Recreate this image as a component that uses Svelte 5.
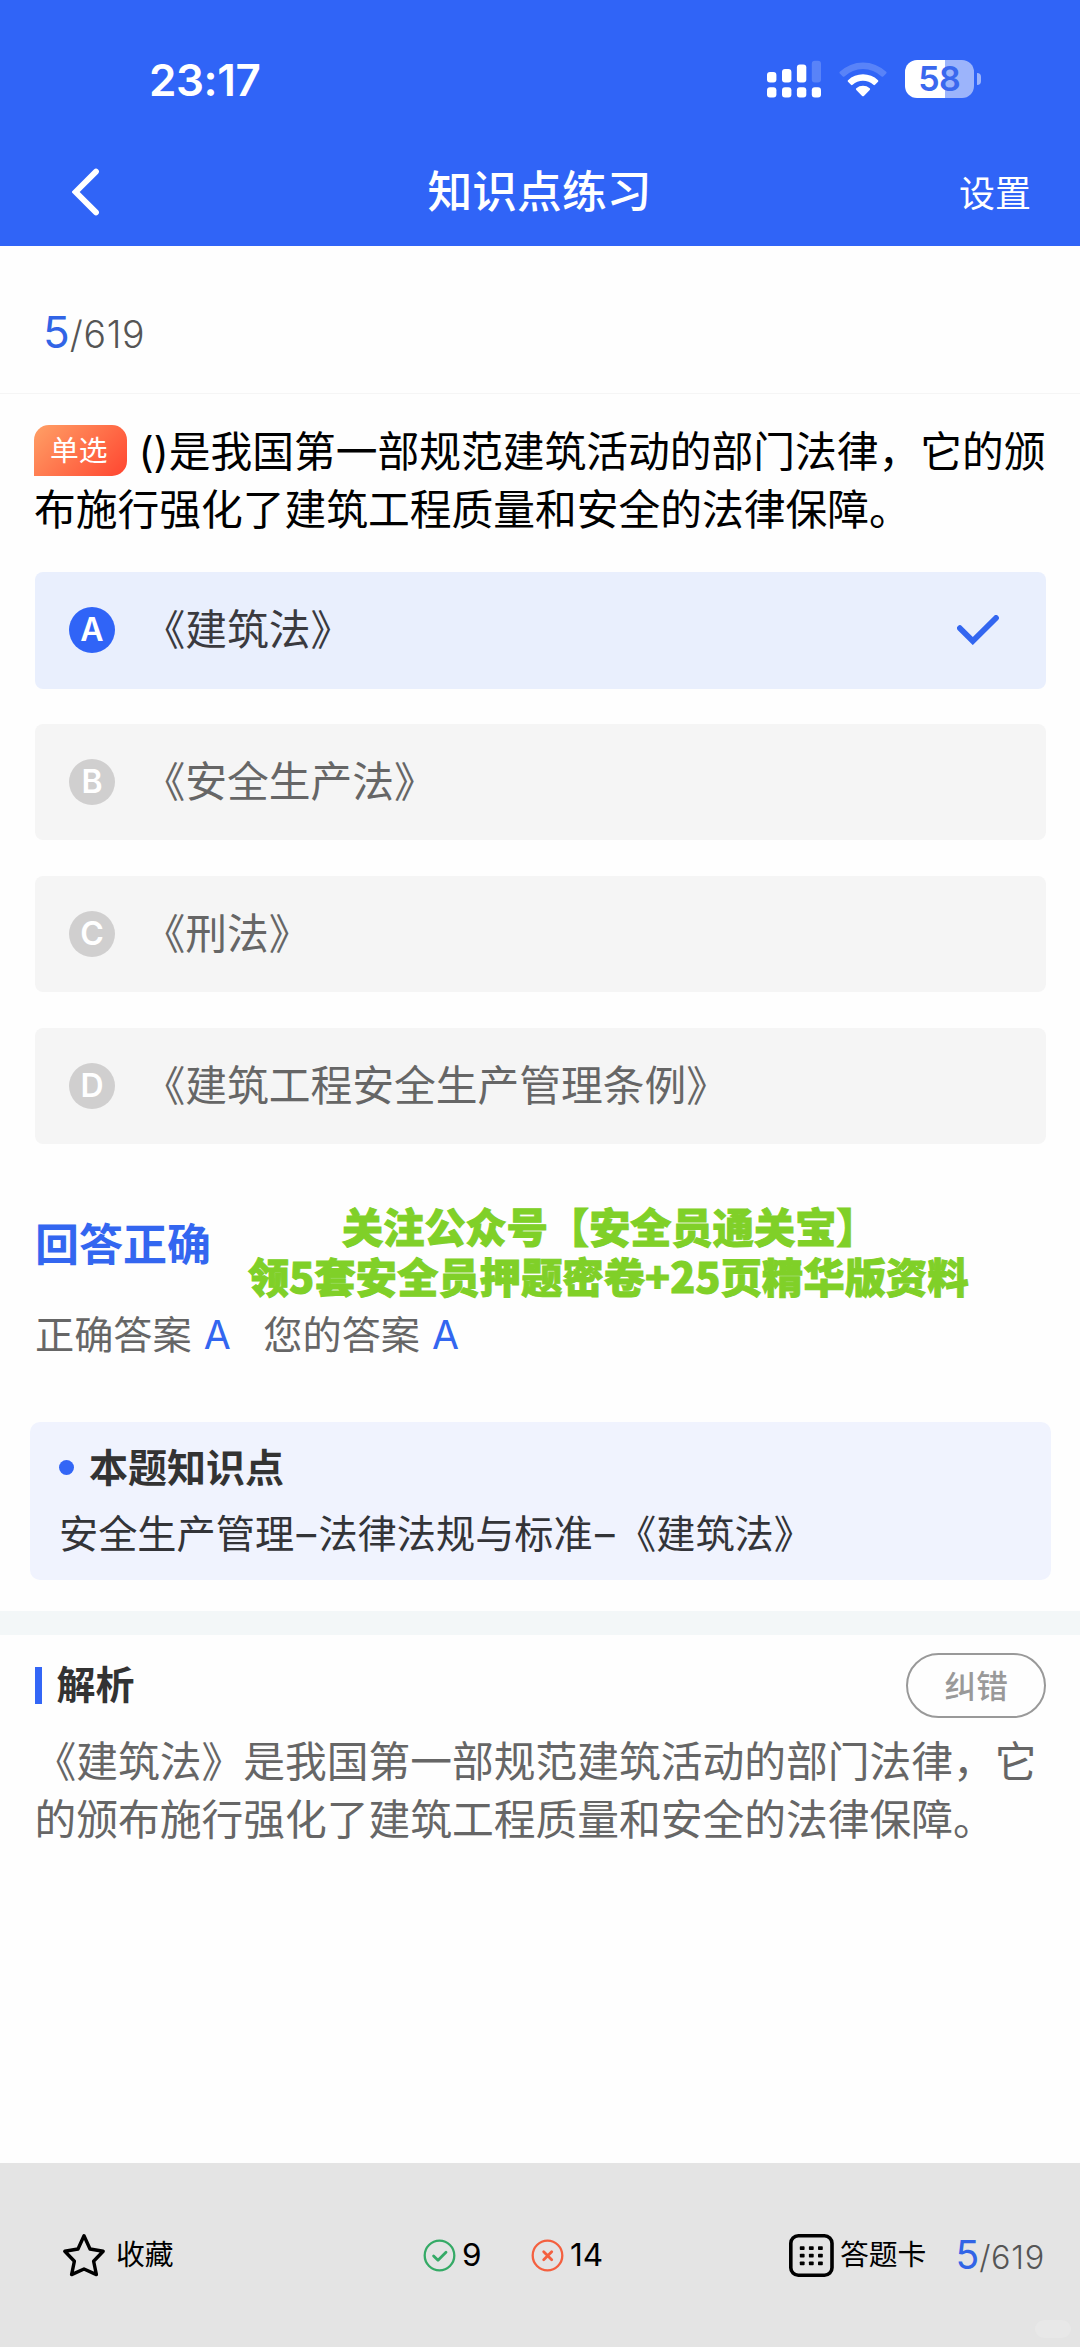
<script>
  const options = [
    { key: 'A', text: '《建筑法》', selected: true },
    { key: 'B', text: '《安全生产法》' },
    { key: 'C', text: '《刑法》' },
    { key: 'D', text: '《建筑工程安全生产管理条例》' }
  ];
  const current = 5;
  const total = 619;
  const dots = [13.2, 22.3, 31.4];
  const dotRows = [14, 21.6, 29.2];
</script>

<div class="page">
  <header>
    <div class="status">
      <span class="time">23:17</span>
      <div class="indicators">
        <svg class="signal" width="54" height="38" viewBox="0 0 54 38" fill="#fff">
          <rect x="0" y="12" width="9.4" height="10.6" rx="3" />
          <rect x="15" y="9" width="9.4" height="13.6" rx="3" />
          <rect x="29.9" y="4.5" width="9.4" height="18.1" rx="3" />
          <rect x="44.8" y="0.7" width="9.2" height="21.9" rx="3" opacity=".2" />
          <rect x="0" y="27.2" width="9.4" height="10.4" rx="3" />
          <rect x="15" y="27.2" width="9.4" height="10.4" rx="3" />
          <rect x="29.9" y="27.2" width="9.4" height="10.4" rx="3" />
          <rect x="44.8" y="27.2" width="9.2" height="10.4" rx="3" />
        </svg>
        <svg class="wifi" width="48" height="36" viewBox="0 0 48 36" fill="#fff">
          <path d="M0.8 10.8a33.5 33.5 0 0 1 46.4 0q.8.8 0 1.6l-3 3q-.8.7-1.6 0a27 27 0 0 0-37.2 0q-.8.7-1.6 0l-3-3q-.8-.8 0-1.6z" opacity=".2" />
          <path d="M9 19.2a22 22 0 0 1 30 0q.8.8 0 1.6l-3 3q-.8.7-1.6 0a15.2 15.2 0 0 0-20.8 0q-.8.7-1.6 0l-3-3q-.8-.8 0-1.6z" />
          <path d="M17.3 27.3a10.3 10.3 0 0 1 13.4 0q.9.8 0 1.6l-5.8 6q-.9.9-1.8 0l-5.8-6q-.9-.8 0-1.6z" />
        </svg>
        <div class="battery"><span class="cell">58</span><span class="nub"></span></div>
      </div>
    </div>
    <nav>
      <svg class="back" width="28" height="48" viewBox="0 0 28 48" fill="none" stroke="#fff" stroke-width="5.8" stroke-linecap="round">
        <path d="M24 3.6L3.6 24L24 44.4" />
      </svg>
      <h1>知识点练习</h1>
      <span class="settings">设置</span>
    </nav>
  </header>

  <div class="progress"><b>{current}</b><i>/{total}</i></div>

  <main>
    <p class="question"><span class="tag">单选</span>()是我国第一部规范建筑活动的部门法律，它的颁布施行强化了建筑工程质量和安全的法律保障。</p>

    <ul class="options">
      {#each options as o}
        <li class:selected={o.selected}>
          <span class="letter">{o.key}</span>
          <span class="label">{o.text}</span>
          {#if o.selected}
            <svg width="42" height="30" viewBox="0 0 42 30" fill="none" stroke="#3366f0" stroke-width="5.8" stroke-linecap="round">
              <path d="M2.9 13.2L15.8 26L39 3" />
            </svg>
          {/if}
        </li>
      {/each}
    </ul>

    <section class="result">
      <h2>回答正确</h2>
      <div class="answers">
        <span>正确答案</span><em>A</em>
        <span class="yours">您的答案</span><em>A</em>
      </div>
      <div class="promo">
        <div>关注公众号【安全员通关宝】</div>
        <div class="line2">领5套安全员押题密卷+25页精华版资料</div>
      </div>
    </section>

    <section class="knowledge">
      <h3><span class="dot"></span>本题知识点</h3>
      <p>安全生产管理<span class="dash">–</span>法律法规与标准<span class="dash">–</span>《建筑法》</p>
    </section>
  </main>

  <div class="band"></div>

  <section class="analysis">
    <div class="head">
      <h3>解析</h3>
      <button>纠错</button>
    </div>
    <p>《建筑法》是我国第一部规范建筑活动的部门法律，它的颁布施行强化了建筑工程质量和安全的法律保障。</p>
  </section>

  <footer>
    <div class="item fav">
      <svg width="44" height="44" viewBox="0 0 44 44" fill="none" stroke="#000" stroke-width="3.4" stroke-linejoin="round">
        <path d="M22 2.8L28 16L41.2 18.2L31.6 28.2L34.4 41.6L22 36L9.6 41.6L12.4 28.2L2.8 18.2L16 16Z" />
      </svg>
      <span>收藏</span>
    </div>
    <div class="item right">
      <svg width="33" height="33" viewBox="0 0 33 33" fill="none" stroke="#35aa66" stroke-width="2.3" stroke-linecap="round" stroke-linejoin="round">
        <circle cx="16.5" cy="16.5" r="14.8" />
        <path d="M10.6 17L15 21.2L23 13.2" stroke-width="2.8" />
      </svg>
      <span>9</span>
    </div>
    <div class="item wrong">
      <svg width="33" height="33" viewBox="0 0 33 33" fill="none" stroke="#f4603f" stroke-width="2.3" stroke-linecap="round">
        <circle cx="16.5" cy="16.5" r="14.8" />
        <path d="M12.7 12.7L20.7 20.7M20.7 12.7L12.7 20.7" stroke-width="2.8" />
      </svg>
      <span>14</span>
    </div>
    <div class="item sheet">
      <svg width="45" height="43" viewBox="0 0 45 43">
        <rect x="1.8" y="1.8" width="41.2" height="39.4" rx="7.5" fill="none" stroke="#000" stroke-width="3.6" />
        {#each dotRows as y}
          {#each dots as x}
            <rect x={x - 2.4} y={y - 1.8} width="4.8" height="3.8" rx=".8" />
          {/each}
        {/each}
      </svg>
      <span>答题卡</span>
    </div>
    <div class="progress small"><b>{current}</b><i>/{total}</i></div>
    <span class="mark"></span>
  </footer>
</div>

<style>
  :global(body) {
    margin: 0;
    background: #fefefe;
  }
  .page {
    width: 1080px;
    height: 2347px;
    display: flex;
    flex-direction: column;
    overflow: hidden;
    background: #fefefe;
    color: #000;
    font-family: Inter, 'Noto Sans CJK SC', sans-serif;
    text-spacing-trim: space-all;
  }
  h1, h2, h3, p, ul {
    margin: 0;
    padding: 0;
  }
  svg {
    display: block;
    flex: none;
  }
  header {
    height: 246px;
    flex: none;
    background: #3064f7;
    color: #fff;
    display: flex;
    flex-direction: column;
  }
  .status {
    height: 98px;
    box-sizing: border-box;
    padding: 60px 99px 0 149px;
    display: flex;
    justify-content: space-between;
  }
  .time {
    font-size: 44px;
    font-weight: 600;
    line-height: 40px;
    letter-spacing: -0.4px;
  }
  .indicators {
    display: flex;
    align-items: flex-start;
  }
  .wifi {
    margin: 1px 18px 0;
  }
  .battery {
    display: flex;
    align-items: center;
    gap: 2.5px;
  }
  .cell {
    width: 69.5px;
    height: 37.5px;
    border-radius: 12px;
    background: linear-gradient(90deg, #fff 57.5%, #9cb4fb 57.5%);
    color: #3a68ee;
    font-size: 34px;
    font-weight: 600;
    line-height: 38px;
    text-align: center;
    letter-spacing: -0.6px;
  }
  .nub {
    width: 4.5px;
    height: 12px;
    border-radius: 0 5px 5px 0;
    background: #9cb4fb;
  }
  nav {
    height: 94px;
    margin-top: 47px;
    padding: 0 49px 0 72px;
    display: grid;
    grid-template-columns: 1fr auto 1fr;
    align-items: center;
  }
  h1 {
    font-size: 44.8px;
    font-weight: 500;
    line-height: 60px;
    margin-left: -24px;
  }
  .settings {
    font-size: 36px;
    line-height: 50px;
    text-align: right;
    padding-top: 3px;
  }
  .progress {
    height: 147.6px;
    flex: none;
    box-sizing: border-box;
    border-bottom: 1.5px solid #f5f5f5;
    padding: 59px 0 0 43px;
    display: flex;
    align-items: baseline;
    line-height: 54px;
  }
  .progress b {
    font-size: 44px;
    font-weight: 400;
    color: #3164e6;
  }
  .progress i {
    font-size: 37.4px;
    font-style: normal;
    font-weight: 300;
    color: #555;
    letter-spacing: 0.7px;
  }
  main {
    height: 1217.4px;
    flex: none;
    padding: 0 29.5px 0 30px;
    box-sizing: border-box;
  }
  .question {
    margin: 29px 0 0 4px;
    height: 116px;
    width: 1020px;
    font-size: 41.76px;
    line-height: 58.4px;
  }
  .tag {
    display: inline-block;
    width: 93.4px;
    height: 51.4px;
    margin: -10px 11px -6px 0;
    position: relative;
    top: -2.5px;
    vertical-align: middle;
    border-radius: 15px 15px 15px 0;
    background: linear-gradient(135deg, #ffa066, #ff4530);
    color: #fff;
    font-size: 28.8px;
    line-height: 52px;
    text-indent: -4px;
    text-align: center;
  }
  .options {
    list-style: none;
    margin: 33.6px 4.5px 0;
    display: flex;
    flex-direction: column;
    gap: 35.4px;
  }
  li {
    height: 116.4px;
    box-sizing: border-box;
    padding: 0 47px 0 34.5px;
    border-radius: 8px;
    background: #f5f5f5;
    color: #666;
    display: flex;
    align-items: center;
  }
  li.selected {
    background: #e9effd;
    color: #3a3a3f;
  }
  .letter {
    width: 46px;
    height: 46px;
    border-radius: 50%;
    background: #d0cfcf;
    color: #fff;
    font-size: 32px;
    font-weight: 600;
    line-height: 46px;
    text-align: center;
  }
  .selected .letter {
    background: #3064f7;
  }
  .label {
    flex: 1;
    margin-left: 28.5px;
    font-size: 41.76px;
    line-height: 60px;
  }
  .result {
    position: relative;
    height: 278px;
    box-sizing: border-box;
    padding: 71px 0 0 5px;
  }
  h2 {
    font-size: 44px;
    font-weight: 700;
    line-height: 60px;
    color: #3366f0;
  }
  .answers {
    display: flex;
    align-items: center;
    margin-top: 30px;
    font-size: 39.2px;
    line-height: 60px;
    color: #666;
  }
  .answers em {
    font-style: normal;
    color: #3366f0;
    margin-left: 12px;
  }
  .yours {
    margin-left: 32.5px;
  }
  .promo {
    position: absolute;
    left: 218px;
    top: 56px;
    font-family: 'Noto Sans CJK SC', sans-serif;
    font-size: 41.1px;
    font-weight: 900;
    line-height: 50px;
    color: #80d028;
    -webkit-text-stroke: 1px #80d028;
    white-space: nowrap;
  }
  .promo div:first-child {
    padding-left: 94px;
    letter-spacing: 0.1px;
  }
  .promo .line2 {
    letter-spacing: 0.22px;
  }
  .knowledge {
    height: 158.4px;
    box-sizing: border-box;
    padding: 16px 29px 0;
    border-radius: 10px;
    background: #f0f3fe;
    color: #333438;
  }
  h3 {
    display: flex;
    align-items: center;
    font-size: 39px;
    font-weight: 700;
    line-height: 60px;
    color: #333;
  }
  .dot {
    width: 15px;
    height: 15px;
    border-radius: 50%;
    background: #3366f6;
    margin-right: 15px;
  }
  .knowledge p {
    font-size: 39.2px;
    line-height: 60px;
    margin-top: 6px;
  }
  .dash {
    display: inline-block;
    width: 24.3px;
    text-align: center;
  }
  .band {
    height: 24px;
    flex: none;
    background: #f3f7f8;
  }
  .analysis {
    flex: 1;
    padding: 18px 34.5px 0;
  }
  .head {
    display: flex;
    align-items: center;
    justify-content: space-between;
  }
  .head h3::before {
    content: '';
    width: 7.5px;
    height: 37px;
    margin-right: 14.5px;
    background: #3366f6;
  }
  button {
    width: 139.5px;
    height: 65px;
    box-sizing: border-box;
    padding: 0 0 3px 1px;
    border: 2px solid #999;
    border-radius: 33px;
    background: none;
    color: #999;
    font-family: inherit;
    font-size: 31.7px;
    font-weight: 500;
  }
  .analysis p {
    margin-top: 15px;
    font-size: 41.76px;
    line-height: 58.4px;
    color: #666;
  }
  footer {
    position: relative;
    height: 184px;
    flex: none;
    box-sizing: border-box;
    padding: 62px 0 0 62px;
    display: flex;
    align-items: flex-start;
    background: #e4e4e4;
  }
  .item {
    display: flex;
    align-items: center;
    height: 60px;
    line-height: 60px;
    font-size: 28.8px;
  }
  .fav {
    width: 361px;
  }
  .fav span {
    margin-left: 10px;
  }
  .right {
    width: 108px;
  }
  .right span, .wrong span {
    font-size: 31.5px;
    margin-left: 6px;
  }
  .wrong {
    width: 258px;
  }
  .sheet span {
    margin-left: 6px;
  }
  .small {
    height: 60px;
    border: 0;
    padding: 0;
    margin-left: 29px;
    line-height: 60px;
  }
  .small b {
    font-size: 39px;
  }
  .small i {
    font-size: 32.4px;
  }
  .mark {
    position: absolute;
    right: 9px;
    bottom: 9px;
    width: 36px;
    height: 18px;
    border-radius: 9px;
    background: #e8e8e8;
  }
</style>
